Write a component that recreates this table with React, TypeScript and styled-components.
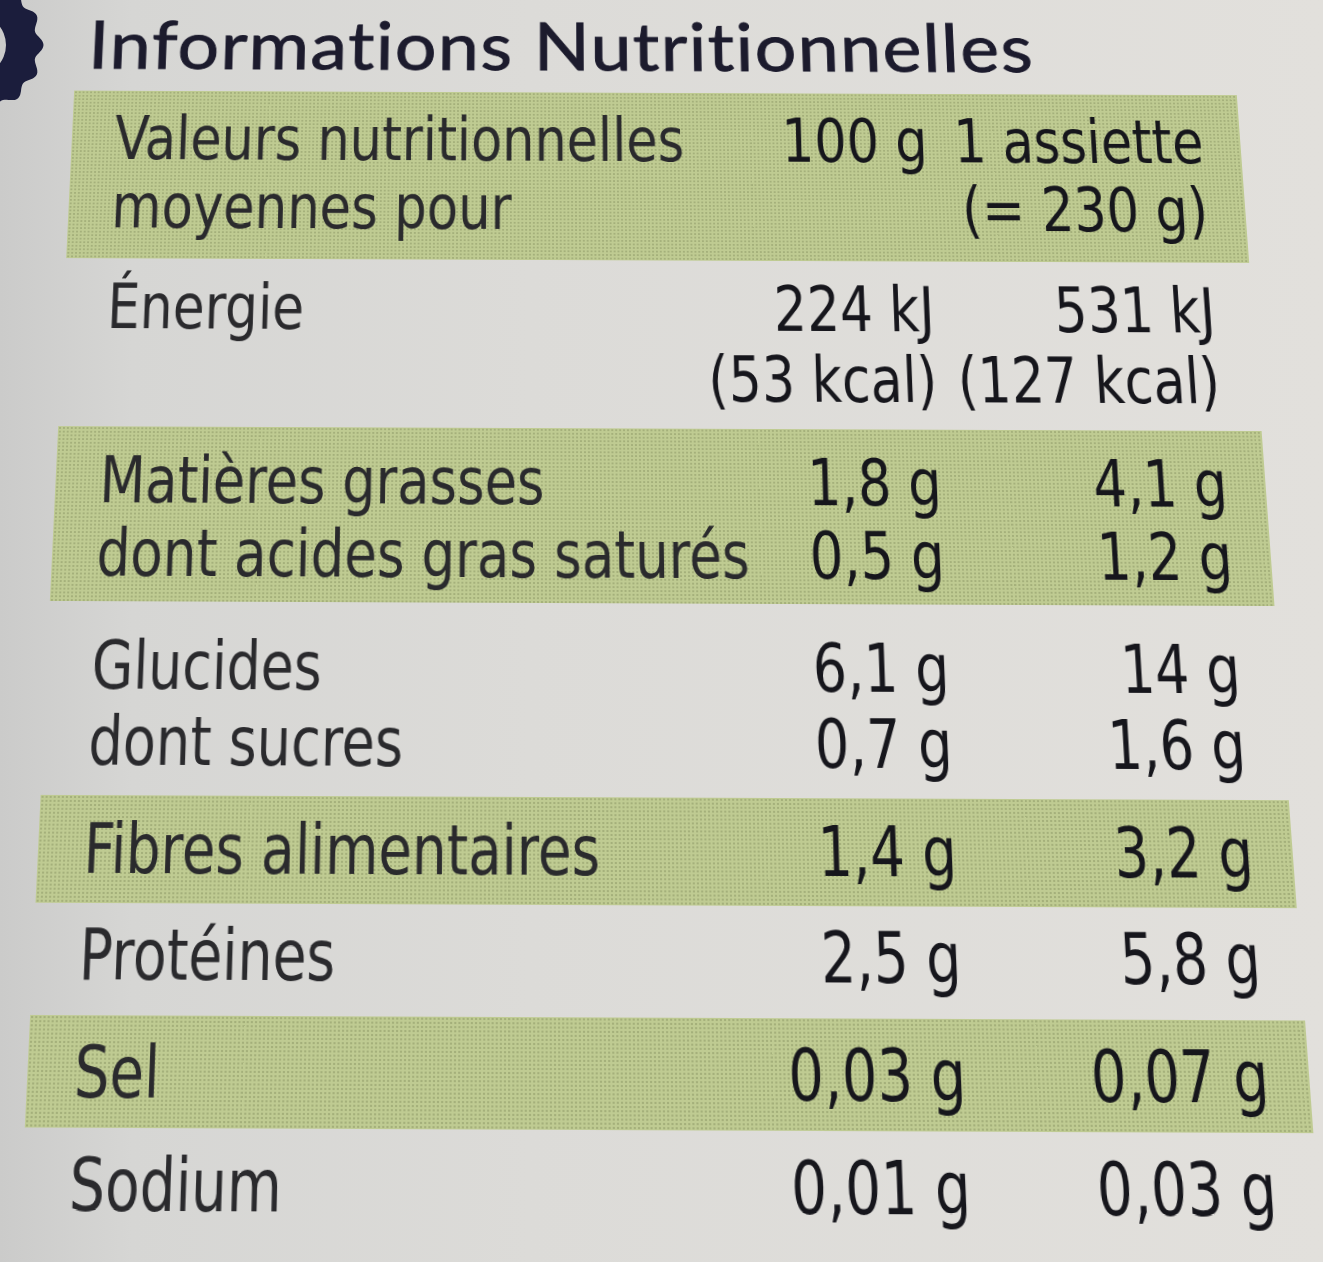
import React from 'react';
import styled, { createGlobalStyle } from 'styled-components';

const GlobalStyle = createGlobalStyle`
  html, body {
    margin: 0;
    padding: 0;
  }
  body {
    width: 1323px;
    height: 1262px;
    overflow: hidden;
    background: #dcdbd7;
  }
`;

const Page = styled.div`
  position: relative;
  width: 1323px;
  height: 1262px;
  overflow: hidden;
  background: linear-gradient(90deg, #cbcbca 0%, #d6d6d4 10%, #dcdbd8 40%, #e2e0dc 100%);
`;

const Badge = styled.svg`
  position: absolute;
  left: -95px;
  top: -25px;
  width: 140px;
  height: 140px;
`;

// the label was photographed at an angle: the whole sheet is tilted back
const Sheet = styled.div`
  width: 1323px;
  margin-top: -60px;
  transform-origin: 484px 700px;
  transform: perspective(3000px) rotateX(16.5deg) rotate(0.25deg);
`;

const Title = styled.h1`
  margin: 0 0 0 61px;
  height: 96px;
  font-family: Lato, "Open Sans", sans-serif;
  font-weight: 400;
  font-size: 78px;
  line-height: 80px;
  letter-spacing: 1.5px;
  color: #1c1b2d;
  -webkit-text-stroke: 1px #1c1b2d;
`;

const Table = styled.div`
  margin-left: 48px;
  width: 1229px;
  display: flex;
  flex-direction: column;
`;

const Row = styled.div<{ $green?: boolean; $h: number; $pt: number }>`
  height: ${p => p.$h}px;
  padding-top: ${p => p.$pt}px;
  box-sizing: border-box;
  background-color: ${p => (p.$green ? '#bfcb92' : 'transparent')};
  background-image: ${p =>
    p.$green
      ? 'radial-gradient(circle, rgba(70, 82, 40, 0.22) 0.8px, transparent 1.3px)'
      : 'none'};
  background-size: 4px 4px;
`;

const Line = styled.div`
  display: grid;
  grid-template-columns: minmax(0, 1fr) 250px 290px;
  padding: 0 39px 0 45px;
  font-family: "DejaVu Sans Condensed", "DejaVu Sans", sans-serif;
  font-size: 70px;
  line-height: 78px;
  white-space: nowrap;
`;

// the print face is much narrower than any installed one
const Label = styled.span`
  color: #2a2a2d;
  transform: scaleX(0.85);
  transform-origin: left center;
`;

const Value = styled.span`
  display: flex;
  justify-content: flex-end;
  color: #16161c;
  transform: scaleX(0.85);
  transform-origin: right center;
`;

type RowData = { green?: boolean; h: number; pt: number; lines: [string, string, string][] };

const rows: RowData[] = [
  {
    green: true,
    h: 192,
    pt: 16,
    lines: [
      ['Valeurs nutritionnelles', '100 g', '1 assiette'],
      ['moyennes pour', '', '(= 230 g)'],
    ],
  },
  {
    h: 186,
    pt: 15,
    lines: [
      ['Énergie', '224 kJ', '531 kJ'],
      ['', '(53 kcal)', '(127 kcal)'],
    ],
  },
  {
    green: true,
    h: 187,
    pt: 19,
    lines: [
      ['Matières grasses', '1,8 g', '4,1 g'],
      ['dont acides gras saturés', '0,5 g', '1,2 g'],
    ],
  },
  {
    h: 200,
    pt: 28,
    lines: [
      ['Glucides', '6,1 g', '14 g'],
      ['dont sucres', '0,7 g', '1,6 g'],
    ],
  },
  { green: true, h: 108, pt: 15, lines: [['Fibres alimentaires', '1,4 g', '3,2 g']] },
  { h: 110, pt: 12, lines: [['Protéines', '2,5 g', '5,8 g']] },
  { green: true, h: 108, pt: 16, lines: [['Sel', '0,03 g', '0,07 g']] },
  { h: 150, pt: 15, lines: [['Sodium', '0,01 g', '0,03 g']] },
];

// scalloped ring, as printed on the pack
const ringPath = (() => {
  const cx = 70;
  const cy = 70;
  const pts: string[] = [];
  for (let i = 0; i <= 240; i++) {
    const a = (i / 240) * Math.PI * 2;
    const r = 65 + 3.5 * Math.cos(a * 14);
    pts.push(`${(cx + r * Math.cos(a)).toFixed(1)},${(cy + r * Math.sin(a)).toFixed(1)}`);
  }
  const outer = 'M' + pts.join('L') + 'Z';
  const inner = `M${cx + 31},${cy}A31,31 0 1,0 ${cx - 31},${cy}A31,31 0 1,0 ${cx + 31},${cy}Z`;
  return outer + inner;
})();

export default function App() {
  return (
    <Page>
      <GlobalStyle />
      <Badge viewBox="0 0 140 140">
        <path d={ringPath} fill="#1b1d3c" fillRule="evenodd" />
      </Badge>
      <Sheet>
        <Title>Informations Nutritionnelles</Title>
        <Table>
          {rows.map((row, i) => (
            <Row key={i} $green={row.green} $h={row.h} $pt={row.pt}>
              {row.lines.map((l, j) => (
                <Line key={j}>
                  <Label>{l[0]}</Label>
                  <Value>{l[1]}</Value>
                  <Value>{l[2]}</Value>
                </Line>
              ))}
            </Row>
          ))}
        </Table>
      </Sheet>
    </Page>
  );
}
